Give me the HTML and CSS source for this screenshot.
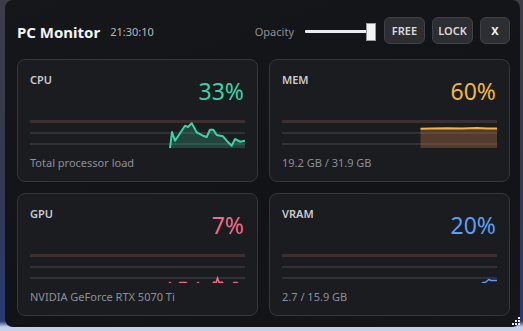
FILE: index.html
```html
<!DOCTYPE html>
<html lang="en">
<head>
<meta charset="UTF-8">
<meta name="viewport" content="width=device-width, initial-scale=1.0">
<title>PC Monitor</title>
<link rel="stylesheet" href="styles.css">
</head>
<body>
<div class="window">
    <div class="titlebar">
        <div class="title">PC Monitor</div>
        <div class="clock">21:30:10</div>
        <div class="spacer"></div>
        <div class="opacity-label">Opacity</div>
        <div class="slider">
            <div class="slider-track"></div>
            <div class="slider-thumb"></div>
        </div>
        <button class="tb-button btn-free">FREE</button>
        <button class="tb-button btn-lock">LOCK</button>
        <button class="tb-button btn-close">X</button>
    </div>

    <div class="grid">
        <!-- CPU -->
        <div class="card">
            <div class="card-head">
                <div class="card-label">CPU</div>
                <div class="card-value cpu">33%</div>
            </div>
            <svg class="chart" viewBox="0 0 215 30" width="215" height="30">
                <rect class="line-top" x="0" y="1" width="215" height="3"/>
                <rect class="line-grid" x="0" y="13" width="215" height="2"/>
                <rect class="line-grid" x="0" y="24" width="215" height="2"/>
                <polygon class="fill-cpu" points="140,29 142,13 145,21.7 155,6.7 158,8 161.7,4.3 166.7,13.3 173,16.7 176.7,18 180,10.7 183.3,10.7 186.7,16 193,17.3 196.7,21.7 201.7,26.7 205,20 210,22.7 215,21.7 215,29"/>
                <polyline class="stroke-cpu" points="140,29 142,13 145,21.7 155,6.7 158,8 161.7,4.3 166.7,13.3 173,16.7 176.7,18 180,10.7 183.3,10.7 186.7,16 193,17.3 196.7,21.7 201.7,26.7 205,20 210,22.7 215,21.7"/>
            </svg>
            <div class="card-sub">Total processor load</div>
        </div>

        <!-- MEM -->
        <div class="card">
            <div class="card-head">
                <div class="card-label">MEM</div>
                <div class="card-value mem">60%</div>
            </div>
            <svg class="chart" viewBox="0 0 215 30" width="215" height="30">
                <rect class="line-top" x="0" y="1" width="215" height="3"/>
                <rect class="line-grid" x="0" y="13" width="215" height="2"/>
                <rect class="line-grid" x="0" y="24" width="215" height="2"/>
                <polygon class="fill-mem" points="138.5,9.5 215,9.5 215,29 138.5,29"/>
                <polyline class="stroke-mem" points="138.5,9.8 150,9.4 165,9.2 180,9.6 195,9.1 205,9.6 215,9.5"/>
            </svg>
            <div class="card-sub">19.2 GB / 31.9 GB</div>
        </div>

        <!-- GPU -->
        <div class="card">
            <div class="card-head">
                <div class="card-label">GPU</div>
                <div class="card-value gpu">7%</div>
            </div>
            <svg class="chart" viewBox="0 0 215 30" width="215" height="30">
                <rect class="line-top" x="0" y="1" width="215" height="3"/>
                <rect class="line-grid" x="0" y="13" width="215" height="2"/>
                <rect class="line-grid" x="0" y="24" width="215" height="2"/>
                <polyline class="stroke-gpu" points="138,31.5 140,29.5 142,31.5 148,31.5 150,29.5 156,29.5 158,31.5 166,31.5 168,29.5 170,31.5 182,31.5 184,29 186,30 187.5,25 189,29.5 192,29 194,31.5 202,31.5 204,29.5 207,29.5 209,31.5 215,31.5"/>
            </svg>
            <div class="card-sub">NVIDIA GeForce RTX 5070 Ti</div>
        </div>

        <!-- VRAM -->
        <div class="card">
            <div class="card-head">
                <div class="card-label">VRAM</div>
                <div class="card-value vram">20%</div>
            </div>
            <svg class="chart" viewBox="0 0 215 30" width="215" height="30">
                <rect class="line-top" x="0" y="1" width="215" height="3"/>
                <rect class="line-grid" x="0" y="13" width="215" height="2"/>
                <rect class="line-grid" x="0" y="24" width="215" height="2"/>
                <polyline class="stroke-vram" points="199,31 201,29.5 203,29.5 205,28 207,26.5 209,27.5 215,27.5"/>
            </svg>
            <div class="card-sub">2.7 / 15.9 GB</div>
        </div>
    </div>

    <!-- resize grip -->
    <svg class="grip" width="10" height="10" viewBox="0 0 10 10">
        <rect x="8" y="0" width="2" height="2"/>
        <rect x="5" y="3" width="2" height="2"/>
        <rect x="8" y="3" width="2" height="2"/>
        <rect x="2" y="6" width="2" height="2"/>
        <rect x="5" y="6" width="2" height="2"/>
        <rect x="8" y="6" width="2" height="2"/>
    </svg>
</div>
</body>
</html>
```

FILE: styles.css
```css
body {
    margin: 0;
    padding: 0;
    width: 523px;
    height: 331px;
    overflow: hidden;
    font-family: "Noto Sans", "Open Sans", sans-serif;
    background: linear-gradient(180deg, #3d3d48 0%, #34394f 50%, #283a72 97%, #c5d0ea 98.8%);
}
.window {
    position: relative;
    box-sizing: border-box;
    width: 515px;
    height: 327px;
    margin: 0 3px 0 5px;
    padding: 17px 10px 0 12px;
    background: linear-gradient(160deg, #16171b 0%, #121317 60%, #15161a 100%);
    border-radius: 8px;
}
.titlebar {
    display: flex;
    align-items: center;
    height: 27px;
    margin-bottom: 15px;
}
.title {
    color: #f3f3f3;
    font-size: 15px;
    font-weight: 700;
    margin-top: 2px;
}
.clock {
    color: #b6b9be;
    font-size: 11px;
    margin-left: 10px;
    margin-top: 2px;
}
.spacer {
    flex: 1;
}
.opacity-label {
    color: #8c8f95;
    font-size: 11px;
    margin-right: 11px;
    margin-top: 1px;
}
.slider {
    position: relative;
    width: 71px;
    height: 18px;
    margin-right: 8px;
    margin-top: 3px;
}
.slider-track {
    position: absolute;
    left: 0;
    right: 4px;
    top: 7px;
    height: 3px;
    background-color: #ececec;
    border-radius: 1px;
}
.slider-thumb {
    position: absolute;
    right: 0;
    top: 0;
    width: 8px;
    height: 16px;
    background-color: #f4f4f4;
    border: 1px solid #9a9a9a;
}
.tb-button {
    box-sizing: border-box;
    height: 27px;
    padding: 0;
    margin-left: 7px;
    background-color: #2d2e32;
    border: 1px solid #404247;
    border-radius: 6px;
    color: #d9dadc;
    font-family: "Noto Sans", "Open Sans", sans-serif;
    font-size: 11px;
    font-weight: 600;
}
.btn-free {
    width: 41px;
    margin-left: 0;
}
.btn-lock {
    width: 41px;
}
.btn-close {
    width: 30px;
    color: #f2f2f2;
    font-weight: 700;
}
.grid {
    display: grid;
    grid-template-columns: 241px 241px;
    gap: 11px;
}
.card {
    box-sizing: border-box;
    height: 123px;
    padding: 12px 12px 0 12px;
    background-color: #1b1c20;
    border: 1px solid #35373c;
    border-radius: 8px;
}
.card-head {
    display: flex;
    justify-content: space-between;
    align-items: flex-start;
    height: 47px;
}
.card-label {
    color: #c8cbd0;
    font-size: 11px;
    font-weight: 600;
    line-height: 16px;
}
.card-value {
    font-size: 23px;
    line-height: 28px;
    margin-top: 5px;
    margin-right: 1px;
}
.cpu { color: #3ad4a5; }
.mem { color: #f2b541; }
.gpu { color: #f06a86; }
.vram { color: #5a9ff0; }
.chart {
    display: block;
    overflow: hidden;
}
.line-top { fill: #3b302d; }
.line-grid { fill: #303237; }
.fill-cpu { fill: rgba(58, 212, 165, 0.22); }
.stroke-cpu {
    fill: none;
    stroke: #3ad4a5;
    stroke-width: 2;
    stroke-linejoin: round;
}
.fill-mem { fill: rgba(190, 120, 70, 0.35); }
.stroke-mem {
    fill: none;
    stroke: #f2b541;
    stroke-width: 2;
}
.stroke-gpu {
    fill: none;
    stroke: #f06a86;
    stroke-width: 1.5;
}
.stroke-vram {
    fill: none;
    stroke: #5a9ff0;
    stroke-width: 1.5;
}
.card-sub {
    color: #8d9096;
    font-size: 11px;
    line-height: 15px;
    margin-top: 6px;
}
/* resize grip sits over the window corner */
.grip {
    position: absolute;
    right: 0;
    bottom: 0;
    fill: #e8ecf4;
}
```
